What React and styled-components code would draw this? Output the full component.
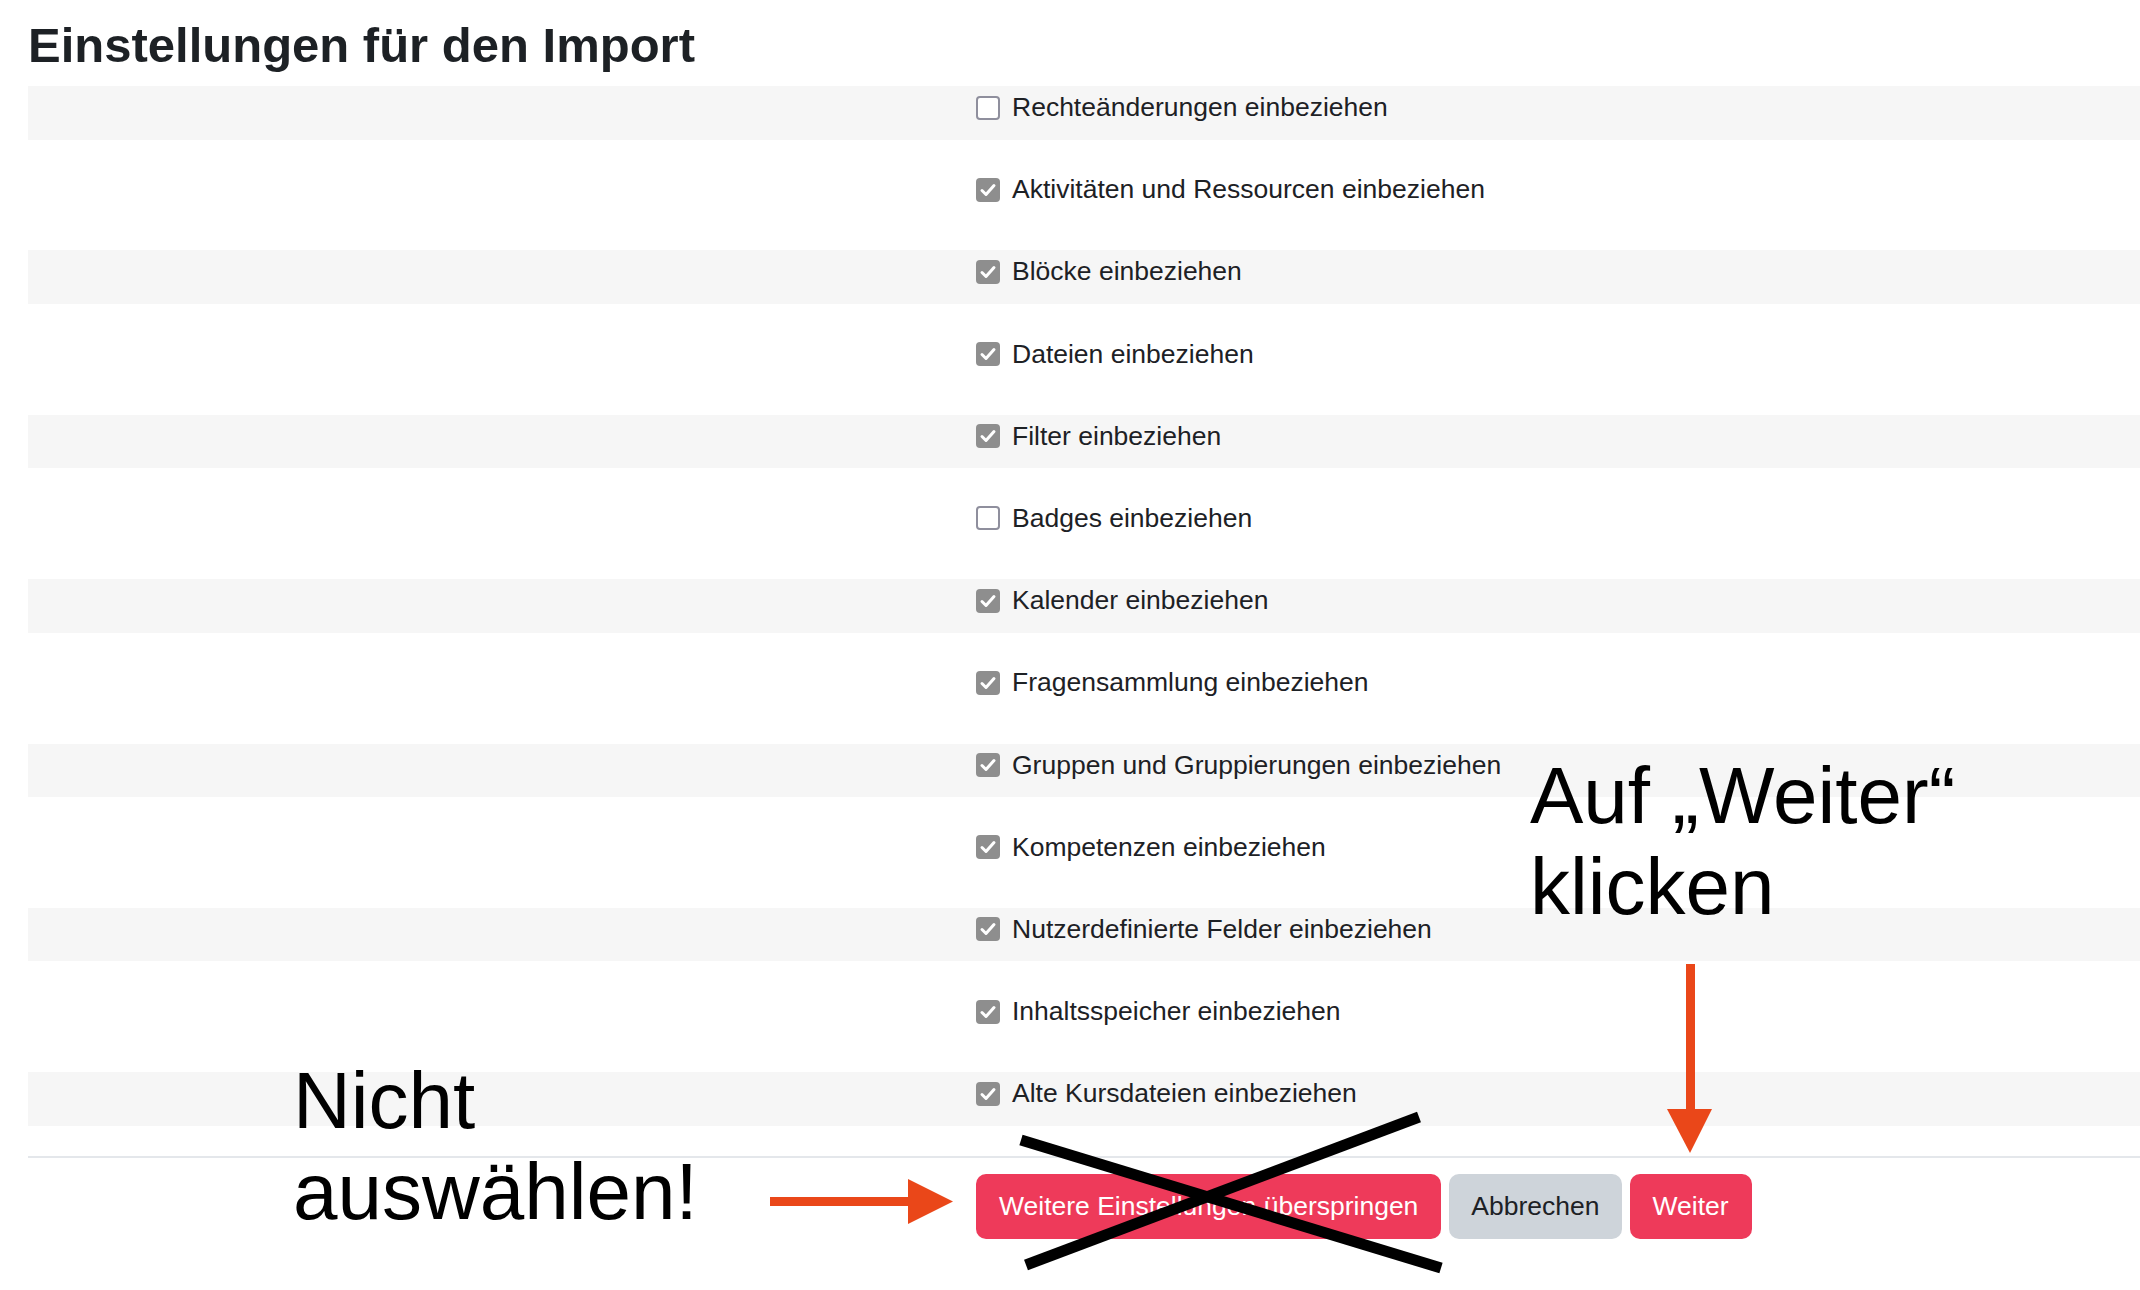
import React from "react";
import styled, { createGlobalStyle } from "styled-components";

const items = [
  { label: "Rechteänderungen einbeziehen", checked: false },
  { label: "Aktivitäten und Ressourcen einbeziehen", checked: true },
  { label: "Blöcke einbeziehen", checked: true },
  { label: "Dateien einbeziehen", checked: true },
  { label: "Filter einbeziehen", checked: true },
  { label: "Badges einbeziehen", checked: false },
  { label: "Kalender einbeziehen", checked: true },
  { label: "Fragensammlung einbeziehen", checked: true },
  { label: "Gruppen und Gruppierungen einbeziehen", checked: true },
  { label: "Kompetenzen einbeziehen", checked: true },
  { label: "Nutzerdefinierte Felder einbeziehen", checked: true },
  { label: "Inhaltsspeicher einbeziehen", checked: true },
  { label: "Alte Kursdateien einbeziehen", checked: true },
];

function Checkbox({ checked }) {
  return (
    <Box checked={checked}>
      {checked && (
        <svg width="24" height="24" viewBox="0 0 24 24">
          <polyline
            points="6,12.5 10,16.5 18,7.5"
            fill="none"
            stroke="#fff"
            strokeWidth="3"
            strokeLinecap="round"
            strokeLinejoin="round"
          />
        </svg>
      )}
    </Box>
  );
}

export default function App() {
  return (
    <Page>
      <GlobalStyle />
      <Heading>Einstellungen für den Import</Heading>
      <List>
        {items.map((item, index) => (
          <Row key={item.label} striped={index % 2 === 0}>
            <div></div>
            <Field>
              <Checkbox checked={item.checked} />
              <Label>{item.label}</Label>
            </Field>
          </Row>
        ))}
      </List>
      <Footer>
        <div></div>
        <Buttons>
          <Button variant="primary">Weitere Einstellungen überspringen</Button>
          <Button variant="secondary">Abbrechen</Button>
          <Button variant="primary">Weiter</Button>
        </Buttons>
      </Footer>

      {/* annotations drawn over the screenshot */}
      <Note style={{ left: 293, top: 1055 }}>
        Nicht
        <br />
        auswählen!
      </Note>
      <Note style={{ left: 1530, top: 750 }}>
        Auf „Weiter“
        <br />
        klicken
      </Note>
      <Marks width="2140" height="1290" viewBox="0 0 2140 1290">
        <rect x="770" y="1197" width="140" height="9" fill="#ea4719" />
        <polygon points="908,1179 953,1201.5 908,1224" fill="#ea4719" />
        <rect x="1686" y="964" width="9" height="148" fill="#ea4719" />
        <polygon points="1667,1109 1712,1109 1690,1153" fill="#ea4719" />
        <line x1="1021" y1="1140" x2="1441" y2="1268" stroke="#000" strokeWidth="11" />
        <line x1="1026" y1="1265" x2="1419" y2="1117" stroke="#000" strokeWidth="11" />
      </Marks>
    </Page>
  );
}

const GlobalStyle = createGlobalStyle`
  body {
    margin: 0;
    background: #ffffff;
    font-family: "Liberation Sans", Arial, sans-serif;
    color: #1d2125;
  }
`;

const Page = styled.div`
  position: relative;
  min-height: 1290px;
  overflow: hidden;
  padding: 16px 0 0 28px;
  box-sizing: border-box;
`;

const Heading = styled.h1`
  margin: 0 0 12px;
  font-size: 49px;
  line-height: 58px;
  font-weight: 700;
  color: #1d2125;
`;

const List = styled.div`
  display: flex;
  flex-direction: column;
  gap: 28.7px;
`;

const Row = styled.div`
  display: grid;
  grid-template-columns: 948px 1fr;
  height: 53.5px;
  background: ${(p) => (p.striped ? "#f6f6f6" : "transparent")};
`;

const Field = styled.div`
  display: flex;
  align-items: center;
  gap: 12px;
  height: 43px;
`;

const Box = styled.span`
  display: inline-flex;
  width: 24px;
  height: 24px;
  box-sizing: border-box;
  border-radius: 4px;
  border: ${(p) => (p.checked ? "none" : "2px solid #8f8f9d")};
  background: ${(p) => (p.checked ? "#8e8e8e" : "#ffffff")};
`;

const Label = styled.span`
  font-size: 26.5px;
  color: #1d2125;
  white-space: nowrap;
`;

const Footer = styled.div`
  display: grid;
  grid-template-columns: 948px 1fr;
  margin-top: 30px;
  padding-top: 16px;
  border-top: 2px solid #e4e7eb;
`;

const Buttons = styled.div`
  display: flex;
  gap: 8px;
`;

const Button = styled.button`
  height: 65px;
  padding: 0 ${(p) => (p.variant === "primary" ? 23 : 22)}px;
  border: none;
  border-radius: 10px;
  font-family: "Liberation Sans", Arial, sans-serif;
  font-size: 26.5px;
  background: ${(p) => (p.variant === "primary" ? "#ee3a5a" : "#ced4da")};
  color: ${(p) => (p.variant === "primary" ? "#ffffff" : "#1d2125")};
`;

const Note = styled.div`
  position: absolute;
  font-size: 80px;
  line-height: 91px;
  color: #000;
  white-space: nowrap;
`;

const Marks = styled.svg`
  position: absolute;
  left: 0;
  top: 0;
  pointer-events: none;
`;
